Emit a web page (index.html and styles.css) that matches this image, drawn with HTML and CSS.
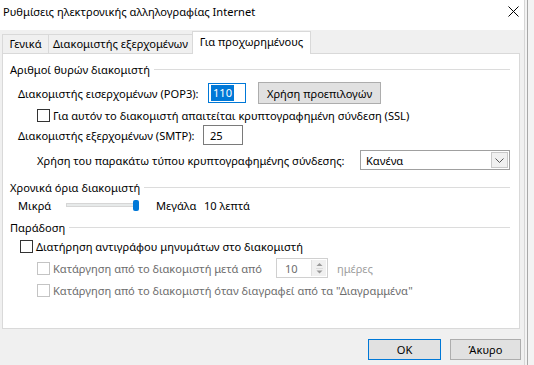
FILE: index.html
```html
<!DOCTYPE html>
<html lang="el">
<head>
<meta charset="utf-8">
<title>Ρυθμίσεις ηλεκτρονικής αλληλογραφίας Internet</title>
<link rel="stylesheet" href="styles.css">
</head>
<body>
<div class="screen">
  <div class="dialog">
    <div class="titlebar">
      <span class="title">Ρυθμίσεις ηλεκτρονικής αλληλογραφίας Internet</span>
      <svg class="close" width="11" height="11" viewBox="0 0 11 11"><path d="M0.5 0.5 L10.5 10.5 M10.5 0.5 L0.5 10.5" stroke="#000" stroke-width="1" fill="none"/></svg>
    </div>
    <div class="body">
      <div class="tabs">
        <div class="tab t1">Γενικά</div>
        <div class="tab t2">Διακομιστής εξερχομένων</div>
        <div class="tab active">Για προχωρημένους</div>
      </div>
      <div class="panel">
        <div class="group-h"><span>Αριθμοί θυρών διακομιστή</span><i class="rule"></i></div>
        <div class="row r-pop3">
          <span class="lbl w-pop3">Διακομιστής εισερχομένων (POP3):</span>
          <span class="input focus w-pop3in"><span class="sel">110</span></span>
          <span class="btn defaults">Χρήση προεπιλογών</span>
        </div>
        <div class="row r-ssl">
          <span class="cb"></span><span class="cbtext">Για αυτόν το διακομιστή απαιτείται κρυπτογραφημένη σύνδεση (SSL)</span>
        </div>
        <div class="row r-smtp">
          <span class="lbl w-smtp">Διακομιστής εξερχομένων (SMTP):</span>
          <span class="input w-smtpin">25</span>
        </div>
        <div class="row r-enc">
          <span class="lbl w-enc">Χρήση του παρακάτω τύπου κρυπτογραφημένης σύνδεσης:</span>
          <span class="select"><span class="sel-val">Κανένα</span><span class="drop"><svg width="9" height="5" viewBox="0 0 9 5"><path d="M0.5 0.5 L4.5 4.5 L8.5 0.5" stroke="#555" stroke-width="1" fill="none"/></svg></span></span>
        </div>

        <div class="group-h g2"><span>Χρονικά όρια διακομιστή</span><i class="rule"></i></div>
        <div class="row r-slider">
          <span class="lbl w-small">Μικρά</span>
          <span class="track"><span class="thumb"></span></span>
          <span class="lbl w-large">Μεγάλα</span>
          <span class="lbl">10 λεπτά</span>
        </div>

        <div class="group-h g3"><span>Παράδοση</span><i class="rule"></i></div>
        <div class="row r-keep">
          <span class="cb"></span><span class="cbtext">Διατήρηση αντιγράφου μηνυμάτων στο διακομιστή</span>
        </div>
        <div class="row r-del1 disabled">
          <span class="cb"></span><span class="cbtext w-del1">Κατάργηση από το διακομιστή μετά από</span>
          <span class="spin"><span class="spin-val">10</span><span class="spin-btns"><svg width="9" height="14" viewBox="0 0 9 14"><path d="M1.5 5 L4.5 2 L7.5 5 Z" fill="#9a9a9a"/><path d="M1 7.5 H8" stroke="#dcdcdc" stroke-width="1"/><path d="M1.5 9.5 L4.5 12.5 L7.5 9.5 Z" fill="#9a9a9a"/></svg></span></span>
          <span class="days">ημέρες</span>
        </div>
        <div class="row r-del2 disabled">
          <span class="cb"></span><span class="cbtext">Κατάργηση από το διακομιστή όταν διαγραφεί από τα "Διαγραμμένα"</span>
        </div>
      </div>
      <div class="footer">
        <span class="btn ok">OK</span>
        <span class="btn cancel">Άκυρο</span>
      </div>
    </div>
  </div>
  <div class="strip"><i class="strip-line"></i></div>
</div>
</body>
</html>
```
FILE: styles.css
```css
* { box-sizing: border-box; }
html, body { margin: 0; padding: 0; }
body {
  font-family: "Noto Sans", "DejaVu Sans", sans-serif;
  font-size: 11.1px;
  color: #000;
  background: #fff;
}
.screen {
  display: flex;
  width: 534px;
  height: 365px;
  overflow: hidden;
}
.dialog {
  width: 525px;
  height: 365px;
  background: #f0f0f0;
  display: flex;
  flex-direction: column;
  border-right: 1px solid #d6d6d6;
  flex: none;
}
.titlebar {
  height: 30px;
  background: #fff;
  display: flex;
  justify-content: space-between;
  align-items: flex-start;
  padding: 3px 5px 0 3px;
}
.title { line-height: 18px; font-size: 11.1px; }
.close { margin-top: 3px; }
.body { display: flex; flex-direction: column; }
.tabs {
  display: flex;
  align-items: flex-end;
  height: 23px;
  margin-top: 1px;
  padding-left: 2px;
}
.tab {
  height: 20px;
  line-height: 18px;
  border: 1px solid #d9d9d9;
  border-bottom: none;
  text-align: center;
  background: #f0f0f0;
  white-space: nowrap;
  flex: none;
}
.t1 { width: 47px; }
.t2 { width: 144px; border-left: none; }
.tab.active {
  height: 23px;
  width: 119px;
  margin-left: -1px;
  background: #fff;
  line-height: 19px;
  position: relative;
  z-index: 1;
}
.panel {
  margin-left: 2px;
  margin-top: -1px;
  width: 518px;
  height: 276px;
  background: #fff;
  border: 1px solid #d9d9d9;
  display: flex;
  flex-direction: column;
}
.group-h {
  display: flex;
  align-items: center;
  height: 16px;
  margin-top: 7px;
  padding-left: 7px;
  padding-right: 9px;
  white-space: nowrap;
}
.group-h .rule {
  flex: 1;
  height: 1px;
  background: #dcdcdc;
  margin-left: 4px;
}
.g2 { margin-top: 9px; }
.g3 { margin-top: 6px; }
.row {
  display: flex;
  align-items: center;
  white-space: nowrap;
}
.row > * { flex: none; }
.lbl { display: inline-block; }
.r-pop3 { height: 22px; margin-top: 5px; padding-left: 15px; }
.w-pop3 { width: 190px; }
.input {
  height: 20px;
  border: 1px solid #7a7a7a;
  background: #fff;
  display: flex;
  align-items: center;
  padding-left: 6px;
}
.input.focus { border-color: #0078d7; padding-left: 2px; }
.w-pop3in { width: 38px; }
.sel { background: #0078d7; color: #fff; padding: 0 2px; line-height: 16px; }
.btn {
  display: flex;
  align-items: center;
  justify-content: center;
  background: #e1e1e1;
  border: 1px solid #adadad;
}
.defaults { width: 123px; height: 22px; margin-left: 12px; }
.r-ssl { height: 14px; margin-top: 4px; padding-left: 34px; }
.cb {
  width: 13px;
  height: 13px;
  border: 1px solid #333;
  background: #fff;
}
.cbtext { margin-left: 3px; }
.r-smtp { height: 20px; margin-top: 3px; padding-left: 15px; }
.w-smtp { width: 185px; }
.w-smtpin { width: 40px; }
.r-enc { height: 20px; margin-top: 5px; padding-left: 34px; }
.w-enc { width: 323px; }
.select {
  width: 150px;
  height: 20px;
  border: 1px solid #a0a0a0;
  background: #fff;
  display: flex;
  align-items: center;
  justify-content: space-between;
  padding: 1px;
}
.sel-val { padding-left: 4px; }
.drop {
  width: 17px;
  height: 16px;
  border: 1px solid #c8c8c8;
  background: #f0f0f0;
  display: flex;
  align-items: center;
  justify-content: center;
}
.r-slider { height: 16px; margin-top: 2px; padding-left: 15px; }
.w-small { width: 48px; }
.track {
  width: 72px;
  height: 4px;
  background: #e7eaea;
  border: 1px solid #d6d6d6;
  display: flex;
  justify-content: flex-end;
  align-items: center;
  margin-right: 18px;
}
.thumb {
  width: 6px;
  height: 11px;
  background: #0078d7;
  border-radius: 2px;
  margin-right: -2px;
  flex: none;
}
.w-large { width: 48px; }
.r-keep { height: 14px; margin-top: 4px; padding-left: 17px; }
.r-del1 { height: 20px; margin-top: 5px; padding-left: 34px; }
.r-del2 { height: 14px; margin-top: 5px; padding-left: 34px; }
.disabled { color: #6d6d6d; }
.disabled .cb { border-color: #c4c4c4; }
.w-del1 { width: 223px; }
.spin {
  width: 52px;
  height: 20px;
  border: 1px solid #d0d0d0;
  display: flex;
  align-items: center;
  justify-content: space-between;
  padding: 1px;
}
.spin-val { padding-left: 7px; }
.spin-btns {
  width: 15px;
  height: 16px;
  background: #f0f0f0;
  border-left: 1px solid #e0e0e0;
  display: flex;
  align-items: center;
  justify-content: center;
}
.days { margin-left: 9px; color: #a0a0a0; }
.footer {
  display: flex;
  justify-content: flex-end;
  gap: 9px;
  margin-top: 10px;
  padding-right: 3px;
}
.ok { width: 73px; height: 21px; border: 1px solid #0078d7; }
.cancel { width: 71px; height: 21px; }
.strip {
  flex: 1;
  height: 365px;
  background: #f3f3f3;
  display: flex;
  padding-left: 2px;
}
.strip-line {
  width: 1px;
  height: 100%;
  background: #a8a8a8;
}
```
